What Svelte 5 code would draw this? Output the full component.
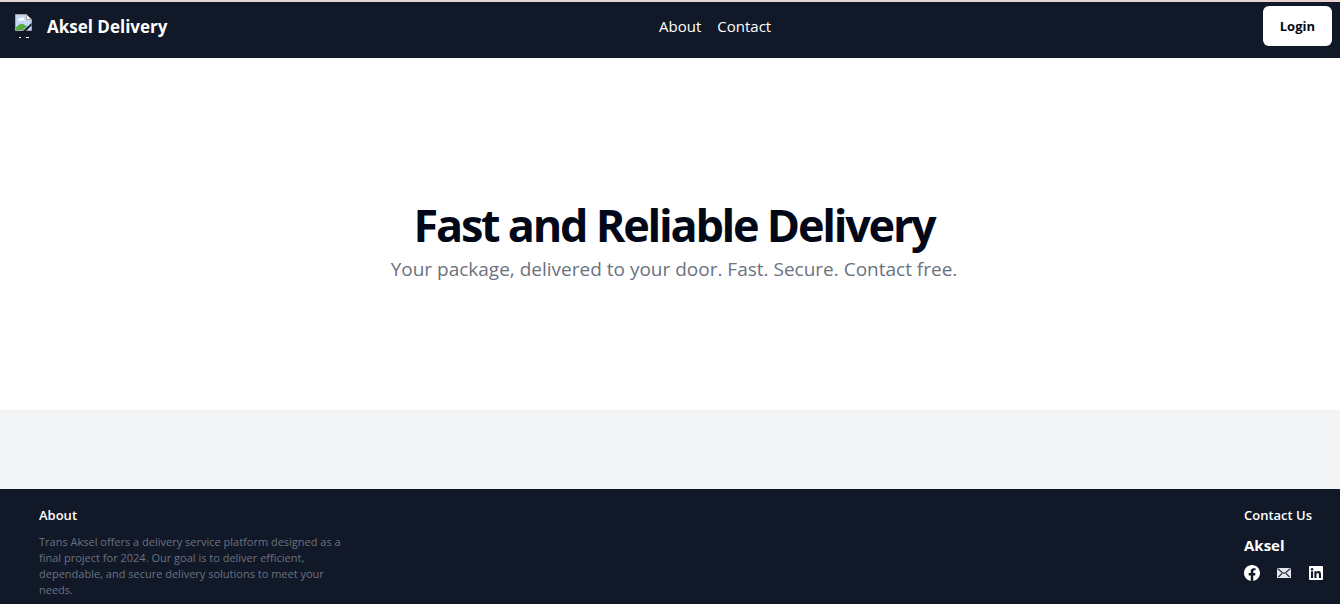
<script>
  const links = ['About', 'Contact'];
</script>

<div class="page">
  <header>
    <a class="brand" href="#home">
      <svg class="logo" width="18" height="26" viewBox="0 0 18 26" aria-hidden="true">
        <path d="M1.500 .5h11l5 5v11h-16z" fill="#c6d7f5" stroke="#a3a3a3" />
        <path d="M4 6c0-1.500 1.500-2 2.500-1.500C7.500 2.500 10 3 10 5c1 0 1 1.500 0 1.500H5C4.300 6.500 4 6.300 4 6z" fill="#fff" />
        <path d="M2 16v-2.500C5 10 8 9 10 10.500l3 2L9 16z" fill="#52ad3c" />
        <path d="M12.500 .5v5h5z" fill="#f5f5f5" stroke="#a3a3a3" />
        <path d="M9 17 17.500 9v2.500L12 17z" fill="#111827" />
        <path d="M5 23.500h2M12 23.500h3" stroke="#fff" />
      </svg>
      <span>Aksel Delivery</span>
    </a>
    <nav aria-label="Main">
      {#each links as link}
        <a href="#{link.toLowerCase()}">{link}</a>
      {/each}
    </nav>
    <button type="button">Login</button>
  </header>

  <main>
    <h1>Fast and Reliable Delivery</h1>
    <p>Your package, delivered to your door. Fast. Secure. Contact free.</p>
  </main>

  <div class="band"></div>

  <footer>
    <section class="about" id="about">
      <h2>About</h2>
      <p>
        Trans Aksel offers a delivery service platform designed as a final project for 2024. Our goal is
        to deliver efficient, dependable, and secure delivery solutions to meet your needs.
      </p>
    </section>
    <section class="contact" id="contact">
      <h2>Contact Us</h2>
      <h3>Aksel</h3>
      <div class="social">
        <a href="#facebook" aria-label="Facebook">
          <svg width="16" height="16" viewBox="0 0 24 24" fill="#fff">
            <path d="M24 12.073C24 5.405 18.627 0 12 0S0 5.405 0 12.073C0 18.100 4.388 23.094 10.125 24v-8.437H7.078v-3.490h3.047v-2.660c0-3.025 1.792-4.697 4.533-4.697 1.312 0 2.686.236 2.686.236v2.971H15.830c-1.491 0-1.956.930-1.956 1.886v2.264h3.328l-.532 3.490h-2.796V24C19.612 23.094 24 18.100 24 12.073z" />
          </svg>
        </a>
        <a href="#mail" aria-label="Email">
          <svg width="16" height="16" viewBox="0 0 16 16">
            <path d="M1 3h14v10H1z" fill="#e5e7eb" />
            <path d="m1.500 3.500 5 4.200q1.500 1 3 0l5-4.200M2.500 12l3.500-3.500M13.500 12 10 8.500" fill="none" stroke="#303644" stroke-width="1.200" />
          </svg>
        </a>
        <a href="#linkedin" aria-label="LinkedIn">
          <svg width="16" height="16" viewBox="0 0 16 16">
            <rect x="1" y="1" width="14" height="14" rx="1" fill="#fff" />
            <path d="M3 6.300h2.100V13H3zM6.400 6.300h2v.9c.4-.7 1.100-1.100 2-1.100 2.100 0 2.600 1.400 2.600 3.200V13h-2.100V9.700c0-.9 0-1.800-1.100-1.800s-1.300.9-1.300 1.800V13H6.400z" fill="#111827" />
            <circle cx="4.050" cy="4.200" r="1.200" fill="#111827" />
          </svg>
        </a>
      </div>
    </section>
  </footer>
</div>

<style>
  :global(body) {
    margin: 0;
    background: #f3f4f6;
  }
  .page {
    display: flex;
    flex-direction: column;
    min-height: 100vh;
    box-sizing: border-box;
    border-top: 2px solid #e9d5cf;
    font-family: 'Segoe UI', 'Open Sans', 'Noto Sans', sans-serif;
    color: #020817;
  }
  h1, h2, h3, p {
    margin: 0;
  }
  a {
    color: inherit;
    text-decoration: none;
  }
  header {
    display: flex;
    justify-content: space-between;
    align-items: flex-start;
    padding: 4px 8px 12px 14px;
    background: #111827;
    color: #fff;
  }
  .brand {
    display: flex;
    align-items: center;
    gap: 15px;
    padding-top: 7px;
    font-size: 17px;
    line-height: 28px;
    font-weight: 700;
  }
  nav {
    display: flex;
    gap: 16px;
    padding-top: 8px;
    font-size: 15px;
    line-height: 24px;
  }
  button {
    height: 40px;
    padding: 0 17px;
    border: 0;
    border-radius: 6px;
    background: #fff;
    color: #020817;
    font: 700 13px/20px 'Segoe UI', 'Open Sans', 'Noto Sans', sans-serif;
  }
  main {
    flex: 1;
    display: flex;
    flex-direction: column;
    align-items: center;
    justify-content: center;
    padding: 24px 16px 8px 24px;
    background: #fff;
    text-align: center;
  }
  h1 {
    font-size: 45px;
    line-height: 48px;
    font-weight: 700;
    letter-spacing: -0.05em;
  }
  main p {
    margin-top: 6px;
    font-size: 19px;
    line-height: 28px;
    color: #6b7280;
  }
  .band {
    height: 79px;
    background: #f3f4f6;
  }
  footer {
    display: flex;
    justify-content: space-between;
    padding: 16px 16px 6px 39px;
    background: #111827;
    color: #fff;
  }
  h2 {
    font-size: 13px;
    line-height: 20px;
    font-weight: 600;
  }
  .about {
    max-width: 312px;
  }
  .about p {
    margin-top: 9px;
    font-size: 11px;
    line-height: 16px;
    color: #6b7280;
  }
  h3 {
    margin-top: 8px;
    font-size: 15px;
    line-height: 24px;
    font-weight: 700;
  }
  .social {
    display: flex;
    gap: 16px;
    margin-top: 8px;
  }
  svg {
    display: block;
  }
</style>
